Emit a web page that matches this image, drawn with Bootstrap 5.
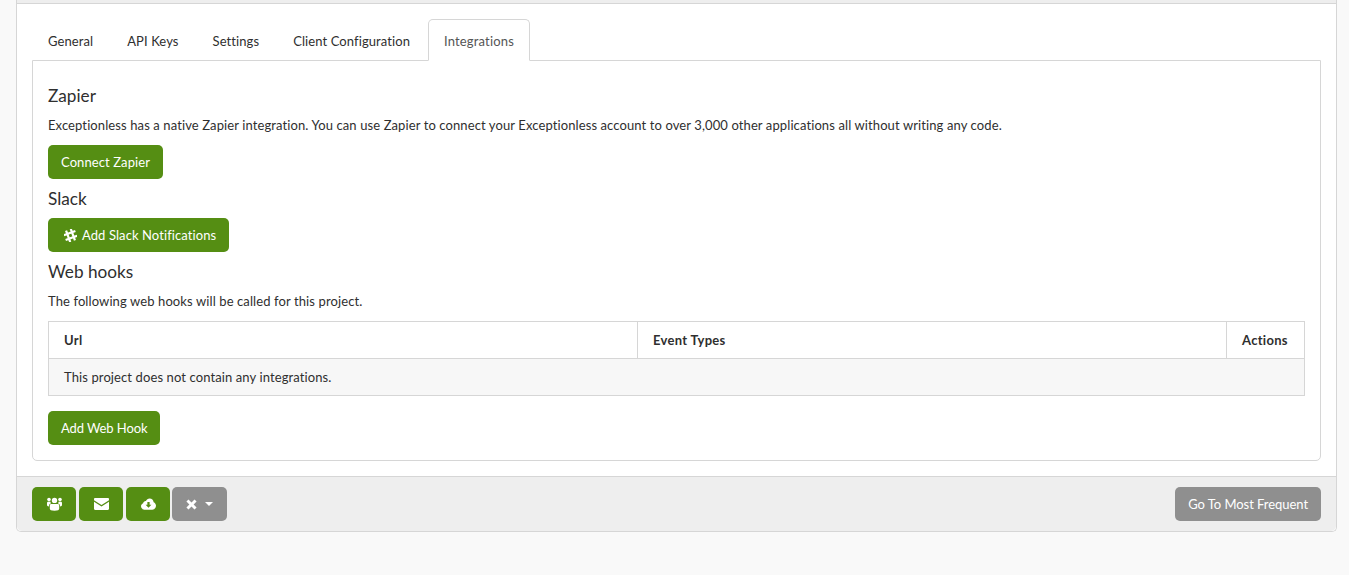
<!DOCTYPE html>
<html lang="en">
<head>
<meta charset="utf-8">
<title>Integrations</title>
<link href="https://cdn.jsdelivr.net/npm/bootstrap@5.3.0/dist/css/bootstrap.min.css" rel="stylesheet">
<style>
html,body{height:575px;overflow:hidden}
body{background:#f9f9f9;color:#2f2f2f;font-family:"Lato","Noto Sans",sans-serif;font-size:13px;line-height:20px;letter-spacing:.105px;padding:0 12px 0 16px}
.shell{background:#fff;border:1px solid #d6d6d6;border-top:0;border-radius:0 0 5px 5px;width:1321px}
.shell-top{height:4px;background:#eee;border-bottom:1px solid #d6d6d6}
.shell-body{padding:15px}
.tabs{border-bottom:0;height:42px;position:relative;z-index:1}
.tabs .nav-link{border:1px solid transparent;border-radius:5px 5px 0 0;color:#2f2f2f;padding:11px 15px 10px;margin-right:2px;height:42px;line-height:20px;font-size:13px;letter-spacing:.09px;background:none}
.tabs .nav-link.active{border-color:#d6d6d6 #d6d6d6 #fff;color:#555;background:#fff;letter-spacing:.16px}
.tab-box{border:1px solid #d6d6d6;border-radius:0 0 5px 5px;margin-top:-1px;padding:15px;height:401px}
.sect{font-size:17.2px;line-height:20px;font-weight:400;letter-spacing:0;margin:10px 0 9px;color:#2f2f2f}
.para{margin:0 0 10px;line-height:20px}
.go,.go:hover{background:#558e13;border:0;color:#fff;font-size:13px;letter-spacing:.09px;height:34px;line-height:34px;padding:0 13px;border-radius:5px}
.gr,.gr:hover{background:#8f8f8f;border:0;color:#fff;font-size:13px;height:34px;line-height:34px;padding:0 13px;border-radius:5px}
.go.btn-tight{letter-spacing:-.1px}
.gr.btn-tight{letter-spacing:-.05px}
.slack-ic{margin:0 5px 0 3px}
.hooks{width:100%;margin:0 0 15px;border:1px solid #d6d6d6;border-collapse:collapse}
.hooks th,.hooks td{border:1px solid #d6d6d6;padding:8px 15px;height:37px;line-height:20px;font-size:13px;color:#2f2f2f}
.hooks th{letter-spacing:.3px}
.hooks td{background:#f7f7f7}
.shell-foot{background:#eee;border-top:1px solid #d6d6d6;height:55px;padding:10px 15px;border-radius:0 0 5px 5px}
.ic{width:44px;padding:0;display:inline-flex;align-items:center;justify-content:center}
.ic2{width:55px;margin-left:-1px}
.foot-group{gap:3px}
</style>
</head>
<body>
<div class="shell">
  <div class="shell-top"></div>
  <div class="shell-body">
    <ul class="nav nav-tabs tabs">
      <li class="nav-item"><a class="nav-link" href="#">General</a></li>
      <li class="nav-item"><a class="nav-link" href="#">API Keys</a></li>
      <li class="nav-item"><a class="nav-link" href="#">Settings</a></li>
      <li class="nav-item"><a class="nav-link" href="#">Client Configuration</a></li>
      <li class="nav-item"><a class="nav-link active" href="#">Integrations</a></li>
    </ul>
    <div class="tab-box">
      <h4 class="sect">Zapier</h4>
      <p class="para">Exceptionless has a native Zapier integration. You can use Zapier to connect your Exceptionless account to over 3,000 other applications all without writing any code.</p>
      <button class="btn go" type="button">Connect Zapier</button>
      <h4 class="sect">Slack</h4>
      <button class="btn go d-inline-flex align-items-center" type="button"><svg class="slack-ic" width="13" height="13" viewBox="0 0 13 13" fill="none" stroke="#fff" stroke-width="2.2"><g transform="rotate(-20 6.500 6.500)"><path d="M4 .4V12.600M9 .4V12.600M.4 4H12.600M.4 9H12.600"/></g></svg>Add Slack Notifications</button>
      <h4 class="sect">Web hooks</h4>
      <p class="para">The following web hooks will be called for this project.</p>
      <table class="hooks">
        <thead><tr><th style="width:589px">Url</th><th>Event Types</th><th style="width:78px">Actions</th></tr></thead>
        <tbody><tr><td colspan="3">This project does not contain any integrations.</td></tr></tbody>
      </table>
      <button class="btn go btn-tight" type="button">Add Web Hook</button>
    </div>
  </div>
  <div class="shell-foot d-flex justify-content-between">
    <div class="d-flex foot-group">
      <button class="btn go ic" type="button" aria-label="Users"><svg width="15" height="14" viewBox="0 0 15 14" fill="#fff"><circle cx="7.500" cy="3.400" r="2.700"/><circle cx="2" cy="2.600" r="1.800"/><circle cx="13" cy="2.600" r="1.800"/><path d="M4.300 7h6.400c.9 0 1.500.7 1.500 1.600v3.200c0 1.300-1.300 2-4.700 2s-4.700-.7-4.700-2V8.600C2.800 7.700 3.400 7 4.300 7z"/><path d="M0 6c0-1 .5-1.300 1.500-1.300h2A3.500 3.500 0 0 0 4 6.400C2.800 6.700 2 7.500 2 8.800v.7C.6 9.300 0 8.800 0 8zM15 6c0-1-.5-1.300-1.500-1.300h-2A3.500 3.500 0 0 1 11 6.400c1.200.3 2 1.100 2 2.400v.7c1.400-.2 2-.7 2-1.500z"/></svg></button>
      <button class="btn go ic" type="button" aria-label="Mail"><svg width="15" height="12" viewBox="0 0 15 12" fill="#fff"><path d="M1.200 0h12.600C14.500 0 15 .5 15 1.200v1.100L7.500 7 0 2.300V1.200C0 .5.500 0 1.200 0z"/><path d="M0 3.800l7.500 4.700L15 3.800v7c0 .7-.5 1.200-1.200 1.200H1.200C.5 12 0 11.500 0 10.800z"/></svg></button>
      <button class="btn go ic" type="button" aria-label="Download"><svg width="15" height="12" viewBox="0 0 16 12" fill="#fff"><path fill-rule="evenodd" d="M3.600 12C1.600 12 0 10.400 0 8.500c0-1.500 1-2.800 2.300-3.300C2.600 3.600 4 2.500 5.300 2.800 6 1.100 7.400 0 9.200 0c2.300 0 4.100 1.700 4.300 4C15 4.600 16 6.100 16 7.900 16 10.200 14.200 12 12 12zM6.800 3.800v3H4.900L8 10l3.100-3.200H9.200v-3z"/></svg></button>
      <button class="btn gr ic ic2" type="button" aria-label="Close"><svg width="11" height="11" viewBox="0 0 11 11" fill="#fff"><path d="M2.500.4L5.500 3.400 8.500.4l2.100 2.100-3 3 3 3-2.100 2.100-3-3-3 3L.4 8.500l3-3-3-3z"/></svg><svg class="ms-2" width="8" height="4" viewBox="0 0 8 4" fill="#fff"><path d="M0 0h8L4 4z"/></svg></button>
    </div>
    <button class="btn gr btn-tight" type="button">Go To Most Frequent</button>
  </div>
</div>
<script src="https://cdn.jsdelivr.net/npm/bootstrap@5.3.0/dist/js/bootstrap.bundle.min.js"></script>
</body>
</html>
